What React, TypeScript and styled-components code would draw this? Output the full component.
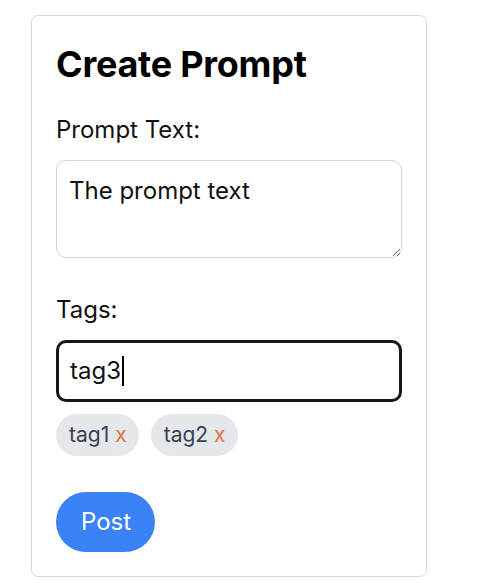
import styled, { createGlobalStyle } from 'styled-components';

const GlobalStyle = createGlobalStyle`
  html, body {
    margin: 0;
    padding: 0;
    background: #ffffff;
  }
  body {
    font-family: Inter, "Noto Sans", sans-serif;
    color: #111111;
  }
  * { box-sizing: border-box; }
`;

const Page = styled.div`
  padding: 15px 0 0 31px;
`;

const Card = styled.form`
  width: 396px;
  border: 1px solid #d5d9de;
  border-radius: 7px;
  padding: 24px;
  background: #ffffff;
`;

const Title = styled.h1`
  margin: 0 0 24px;
  font-size: 36px;
  line-height: 48px;
  font-weight: 700;
  letter-spacing: -0.25px;
  color: #000000;
`;

const Label = styled.label`
  display: block;
  margin-bottom: 12px;
  font-size: 24px;
  line-height: 36px;
  color: #111111;
`;

const TextArea = styled.textarea`
  display: block;
  width: 100%;
  height: 98px;
  margin: 0 0 34px;
  padding: 12px 12px 10px;
  border: 1px solid #d1d5db;
  border-radius: 10px;
  font-family: Inter, "Noto Sans", sans-serif;
  font-size: 24px;
  line-height: 36px;
  color: #111111;
  outline: none;
  resize: vertical;
`;

const Field = styled.div`
  display: flex;
  align-items: center;
  height: 62px;
  padding: 0 11px;
  border: 3px solid #161616;
  border-radius: 10px;
  font-size: 24px;
  line-height: 36px;
  color: #111111;
`;

const Caret = styled.span`
  display: inline-block;
  width: 2px;
  height: 30px;
  margin-left: 1px;
  background: #000000;
`;

const TagList = styled.div`
  display: flex;
  gap: 12px;
  margin-top: 12px;
`;

const Tag = styled.span`
  display: inline-flex;
  align-items: center;
  gap: 6px;
  padding: 6px 12px 6px 13px;
  border-radius: 999px;
  background: #e5e7eb;
  font-size: 21px;
  line-height: 30px;
  color: #374151;
`;

const Remove = styled.span`
  color: #e2703d;
`;

const PostButton = styled.button`
  margin-top: 36px;
  height: 60px;
  padding: 0 24px 0 25px;
  border: none;
  border-radius: 999px;
  background: #3b82f6;
  color: #ffffff;
  font-family: Inter, "Noto Sans", sans-serif;
  font-size: 24px;
  line-height: 36px;
`;

const tags = ['tag1', 'tag2'];

export default function App() {
  return (
    <Page>
      <GlobalStyle />
      <Card onSubmit={(e) => e.preventDefault()}>
        <Title>Create Prompt</Title>
        <Label htmlFor="prompt">Prompt Text:</Label>
        <TextArea id="prompt" rows={2} defaultValue="The prompt text" readOnly />
        <Label>Tags:</Label>
        <Field>
          tag3
          <Caret />
        </Field>
        <TagList>
          {tags.map((tag) => (
            <Tag key={tag}>
              {tag}
              <Remove>x</Remove>
            </Tag>
          ))}
        </TagList>
        <PostButton type="submit">Post</PostButton>
      </Card>
    </Page>
  );
}
